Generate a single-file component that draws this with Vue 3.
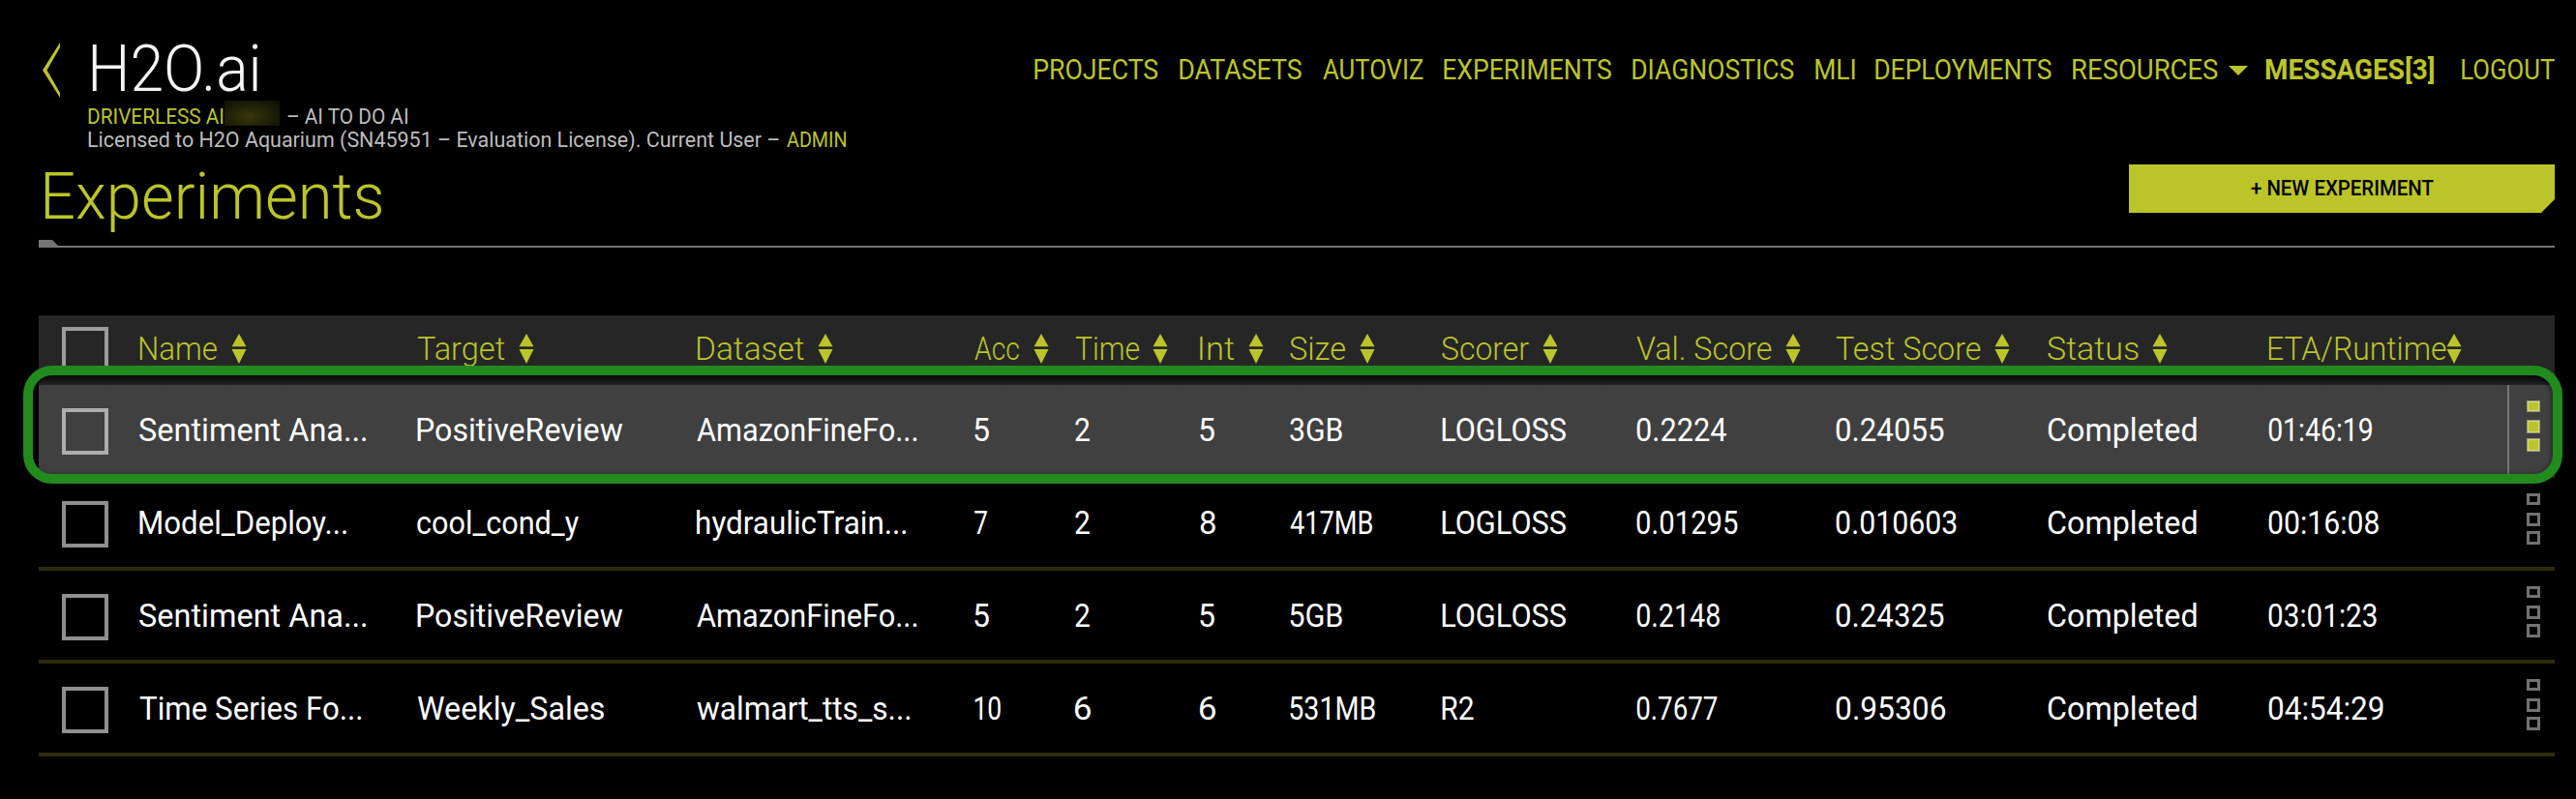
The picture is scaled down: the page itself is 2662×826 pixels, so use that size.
<script setup>
// Scales a label horizontally so that its ink spans the given width in px.
const ctx = document.createElement('canvas').getContext('2d')
function fit(el, { value }) {
  const cs = getComputedStyle(el)
  ctx.font = `${cs.fontWeight} ${cs.fontSize} ${cs.fontFamily}`
  const m = ctx.measureText(el.textContent)
  const ink = m.actualBoundingBoxRight + m.actualBoundingBoxLeft
  const s = value / ink
  el.style.width = `${value}px`
  el.style.transform = `translateX(${m.actualBoundingBoxLeft * s}px) scaleX(${s})`
}
const vFit = { mounted: fit }

const nav = [
  ['PROJECTS', 128], ['DATASETS', 126.5], ['AUTOVIZ', 104], ['EXPERIMENTS', 173.7],
  ['DIAGNOSTICS', 167], ['MLI', 41], ['DEPLOYMENTS', 182.3], ['RESOURCES', 150.2],
]
const columns = [
  ['Name', 80], ['Target', 90.5], ['Dataset', 111], ['Acc', 46], ['Time', 66], ['Int', 35.5],
  ['Size', 57], ['Scorer', 90], ['Val. Score', 139.5], ['Test Score', 149.5], ['Status', 93.5], ['ETA/Runtime', 183.5],
]
const rows = [
  [['Sentiment Ana...', 235], ['PositiveReview', 213], ['AmazonFineFo...', 228], ['5', 15.5], ['2', 15.5], ['5', 15.5], ['3GB', 54], ['LOGLOSS', 128.5], ['0.2224', 93], ['0.24055', 112], ['Completed', 154], ['01:46:19', 107.5]],
  [['Model_Deploy...', 214.5], ['cool_cond_y', 167.5], ['hydraulicTrain...', 217], ['7', 13.5], ['2', 15.5], ['8', 16], ['417MB', 85], ['LOGLOSS', 128.5], ['0.01295', 105], ['0.010603', 125], ['Completed', 154], ['00:16:08', 114]],
  [['Sentiment Ana...', 235], ['PositiveReview', 213], ['AmazonFineFo...', 228], ['5', 15.5], ['2', 15.5], ['5', 15.5], ['5GB', 54], ['LOGLOSS', 128.5], ['0.2148', 86], ['0.24325', 112], ['Completed', 154], ['03:01:23', 112]],
  [['Time Series Fo...', 230], ['Weekly_Sales', 193.5], ['walmart_tts_s...', 221], ['10', 27], ['6', 16], ['6', 16], ['531MB', 88], ['R2', 33], ['0.7677', 84], ['0.95306', 113], ['Completed', 154], ['04:54:29', 119]],
]
</script>

<template>
  <div class="page">
    <header class="top">
      <svg class="back" width="18" height="57" viewBox="0 0 18 57"><path d="M18 0V5L4.5 28.5L18 52V57L0 28.5Z" /></svg>
      <div class="brand">
        <div class="logo"><span v-fit="172" class="t">H2O.ai</span></div>
        <div class="line"><span v-fit="140" class="t lime">DRIVERLESS AI</span><i class="smudge"></i><span v-fit="125" class="t">– AI TO DO AI</span></div>
        <div class="line"><span v-fit="714" class="t">Licensed to H2O Aquarium (SN45951 – Evaluation License). Current User –</span><span v-fit="61" class="t lime admin">ADMIN</span></div>
      </div>
      <nav class="nav">
        <a v-for="n in nav" :key="n[0]"><span v-fit="n[1]" class="t">{{ n[0] }}</span></a>
        <svg class="caret" width="20" height="10"><path d="M0 0H20L10 10Z" /></svg>
        <a class="messages"><span v-fit="174.5" class="t">MESSAGES[3]</span></a>
        <a class="logout"><span v-fit="96" class="t">LOGOUT</span></a>
      </nav>
    </header>

    <section class="title-row">
      <h1><span v-fit="348" class="t">Experiments</span></h1>
      <button class="new"><span v-fit="188.5" class="t">+ NEW EXPERIMENT</span></button>
    </section>
    <svg class="rule" width="2600" height="8"><path d="M0 0H14L20 6H2600V8H0Z" /></svg>

    <main class="table">
      <div class="row head">
        <i class="check"></i>
        <div v-for="c in columns" :key="c[0]" class="cell" :class="{ tight: c[0] === 'ETA/Runtime' }">
          <span v-fit="c[1]" class="t">{{ c[0] }}</span>
          <svg class="sort" width="16" height="31" viewBox="0 0 16 31"><path d="M8 0L15.5 13.2H.5ZM.5 16H15.5L8 31Z" /></svg>
        </div>
      </div>
      <div v-for="(r, i) in rows" :key="i" class="row" :class="{ active: i === 0 }">
        <i class="check"></i>
        <div v-for="(c, j) in r" :key="j" class="cell"><span v-fit="c[1]" class="t">{{ c[0] }}</span></div>
        <div class="menu"><i></i><i></i><i></i></div>
      </div>
      <div class="highlight"></div>
    </main>
  </div>
</template>

<style>
body { background: #000; }
</style>

<style scoped>
.page {
  box-sizing: border-box;
  width: 2662px;
  height: 826px;
  padding: 0 22px 0 40px;
  overflow: hidden;
  background: #000;
  color: #fff;
  font-family: Roboto, "Liberation Sans", sans-serif;
}
.t {
  display: inline-block;
  white-space: pre;
  transform-origin: 0 50%;
}
.lime { color: #bbc52a; }
.top { display: flex; height: 160px; }
.back { margin: 44px 0 0 4px; flex: none; fill: #bbc52a; }
.brand { margin-left: 29px; padding-top: 34px; }
.logo {
  height: 74px;
  margin-left: 4px;
  font-size: 66px;
  line-height: 75px;
  font-weight: 300;
  color: #f5f5f5;
}
.line {
  display: flex;
  height: 24px;
  font-size: 22px;
  line-height: 25px;
  color: #bdbdbd;
}
.admin { margin-left: 8px; }
.smudge {
  width: 57px;
  height: 26px;
  margin: -4px 8px 0 1px;
  background: radial-gradient(ellipse at 45% 62%, #37390c, #212309 45%, #0c0c02 100%);
}
.nav {
  display: flex;
  flex: none;
  gap: 21.44px;
  margin-left: auto;
  height: 40px;
  padding-top: 52px;
  font-size: 29px;
  line-height: 40px;
  color: #bbc52a;
}
.caret { margin: 16px -3px 0 -11px; fill: #bbc52a; }
.messages { font-weight: 700; }
.logout { margin-left: 7px; }
.title-row {
  display: flex;
  justify-content: space-between;
  height: 88px;
}
h1 {
  margin: 6px 0 0 5.5px;
  height: 74px;
  font-size: 66px;
  line-height: 75px;
  font-weight: 300;
  color: #bbc52a;
}
.new {
  width: 440px;
  height: 50px;
  margin: 10px 0 0;
  padding: 0;
  border: 0;
  background: #bbc52a;
  clip-path: polygon(0 0, 100% 0, 100% 36px, 426px 100%, 0 100%);
  font: 500 22px/50px Roboto, sans-serif;
  color: #000;
}
.rule { display: block; fill: #757575; }
.table { position: relative; margin-top: 70px; }
.row {
  display: grid;
  box-sizing: border-box;
  grid-template-columns: 104px 287px 288.5px 287.5px 103.5px 129.5px 93px 156.5px 201.5px 205.5px 219px 228px 247.5px 49px;
  height: 96px;
  border-bottom: 4px solid #2c2c0c;
  font-size: 33px;
  line-height: 93px;
}
.head {
  height: 72px;
  border: 0;
  background: linear-gradient(#262626 0 61px, #0e0e0e 62px, #121212 66px, #232323 72px);
  line-height: 69px;
  color: #bbc52a;
  font-weight: 300;
}
.check {
  box-sizing: border-box;
  width: 48px;
  height: 48px;
  margin: 24px 0 0 24px;
  border: 4px solid #8f8f8f;
}
.head .check { margin-top: 12px; border-color: #9c9c9c; }
.active .check { border-color: #adadad; }
.cell { display: flex; }
.sort { flex: none; margin: 19px 0 0 14.5px; fill: #bbc52a; }
.tight .sort { margin-left: 1px; }
.active { background: #404040; }
.menu {
  display: flex;
  flex-direction: column;
  padding: 16px 0 0 18px;
}
.active .menu { border-left: 2px solid #777; }
.row:not(.active) .menu { padding-left: 20px; }
.menu i {
  box-sizing: border-box;
  width: 14px;
  height: 14px;
  margin-bottom: 5px;
  border: 3px solid #727272;
}
.menu i:first-child { height: 12px; margin-bottom: 8px; }
.active .menu i { border: 1px solid #96967c; background: #bbc52a; box-shadow: inset 0 0 0 1px #d2d98a; }
.highlight {
  position: absolute;
  box-sizing: border-box;
  left: -16px;
  top: 52px;
  width: 2624px;
  height: 122px;
  border: 10px solid #228b1e;
  border-radius: 30px;
  box-shadow: inset -1px 1px 5px rgba(0, 0, 0, 0.5);
}
</style>
